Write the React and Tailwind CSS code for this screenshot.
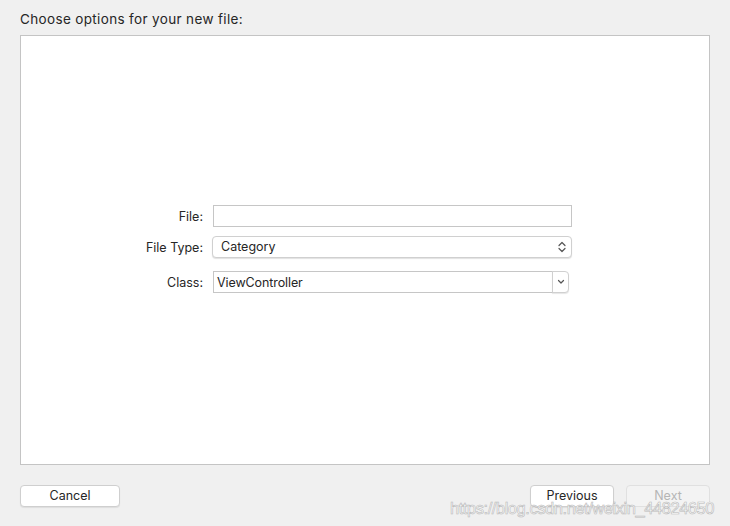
import React from 'react';

// Small up/down chevrons used by the popup button
const UpDownIcon = () => (
    <svg width="8" height="12" viewBox="0 0 8 12" fill="none" stroke="#555" strokeWidth="1.2" strokeLinecap="round" strokeLinejoin="round">
        <path d="M1 4.5 L4 1.5 L7 4.5" />
        <path d="M1 7.5 L4 10.5 L7 7.5" />
    </svg>
);

const ChevronDown = () => (
    <svg width="8" height="6" viewBox="0 0 8 6" fill="none" stroke="#555" strokeWidth="1.2" strokeLinecap="round" strokeLinejoin="round">
        <path d="M1.5 1.5 L4 4 L6.5 1.5" />
    </svg>
);

const Row = ({ label, children, className = '' }) => (
    <div className={`flex items-center ${className}`}>
        <div className="w-[183px] text-right pr-px pt-[2px] text-[12.5px] text-[#262626]">{label}</div>
        <div className="ml-[9px]">{children}</div>
    </div>
);

const App = () => {
    return (
        <div
            className="relative w-[730px] h-[526px] bg-[#f0f0f0] overflow-hidden"
            style={{ fontFamily: 'Inter, "Liberation Sans", sans-serif' }}
        >
            {/* Title */}
            <div className="h-[35px] px-[20px] pt-[11px] text-[13.5px] leading-[16px] tracking-[0.35px] text-[#262626]">
                Choose options for your new file:
            </div>

            {/* Main panel */}
            <div className="mx-[20px] h-[430px] bg-white border border-[#c4c4c4] pt-[169px]">
                <Row label="File:">
                    <div className="w-[359px] h-[22px] border border-[#c6c6c6] bg-white" />
                </Row>

                <Row label="File Type:" className="mt-[9px]">
                    <div className="w-[360px] h-[22px] -ml-px rounded-[4px] border border-[#d0d0d0] bg-white shadow-[0_1px_1px_rgba(0,0,0,0.12)] flex items-center justify-between pl-[8px] pr-[5px]">
                        <span className="pt-px text-[12.5px] text-[#262626]">Category</span>
                        <UpDownIcon />
                    </div>
                </Row>

                <Row label="Class:" className="mt-[13px]">
                    <div className="w-[356px] h-[22px] flex">
                        <div className="flex-1 border border-[#c6c6c6] bg-white flex items-center pl-[3px] pt-[2px] text-[12.5px] tracking-[-0.1px] text-[#262626]">
                            ViewController
                        </div>
                        <div className="w-[17px] -ml-px border border-[#d0d0d0] rounded-r-[4px] bg-white flex items-center justify-center shadow-[0_1px_1px_rgba(0,0,0,0.1)]">
                            <ChevronDown />
                        </div>
                    </div>
                </Row>
            </div>

            {/* Footer buttons */}
            <div className="mt-[20px] px-[20px] flex items-center">
                <button className="w-[100px] h-[22px] pt-px rounded-[4px] border border-[#cfcfcf] bg-white text-[12.5px] text-[#262626] shadow-[0_1px_1px_rgba(0,0,0,0.08)]">
                    Cancel
                </button>
                <div className="flex-1" />
                <button className="w-[84px] h-[22px] pt-px rounded-[4px] border border-[#cfcfcf] bg-white text-[12.5px] text-[#262626] shadow-[0_1px_1px_rgba(0,0,0,0.08)]">
                    Previous
                </button>
                <button disabled className="ml-[12px] w-[84px] h-[22px] pt-px rounded-[4px] border border-[#e0e0e0] bg-[#f3f3f3] text-[12.5px] text-[#b5b5b5]">
                    Next
                </button>
            </div>

            {/* Watermark */}
            <div
                className="absolute left-[450px] top-[497px] text-[16.5px] leading-[22px] text-white tracking-[-0.45px]"
                style={{ WebkitTextStroke: '0.6px #b8b8b8', fontFamily: '"Liberation Sans", sans-serif' }}
            >
                https://blog.csdn.net/weixin_44824650
            </div>
        </div>
    );
};

export default App;
